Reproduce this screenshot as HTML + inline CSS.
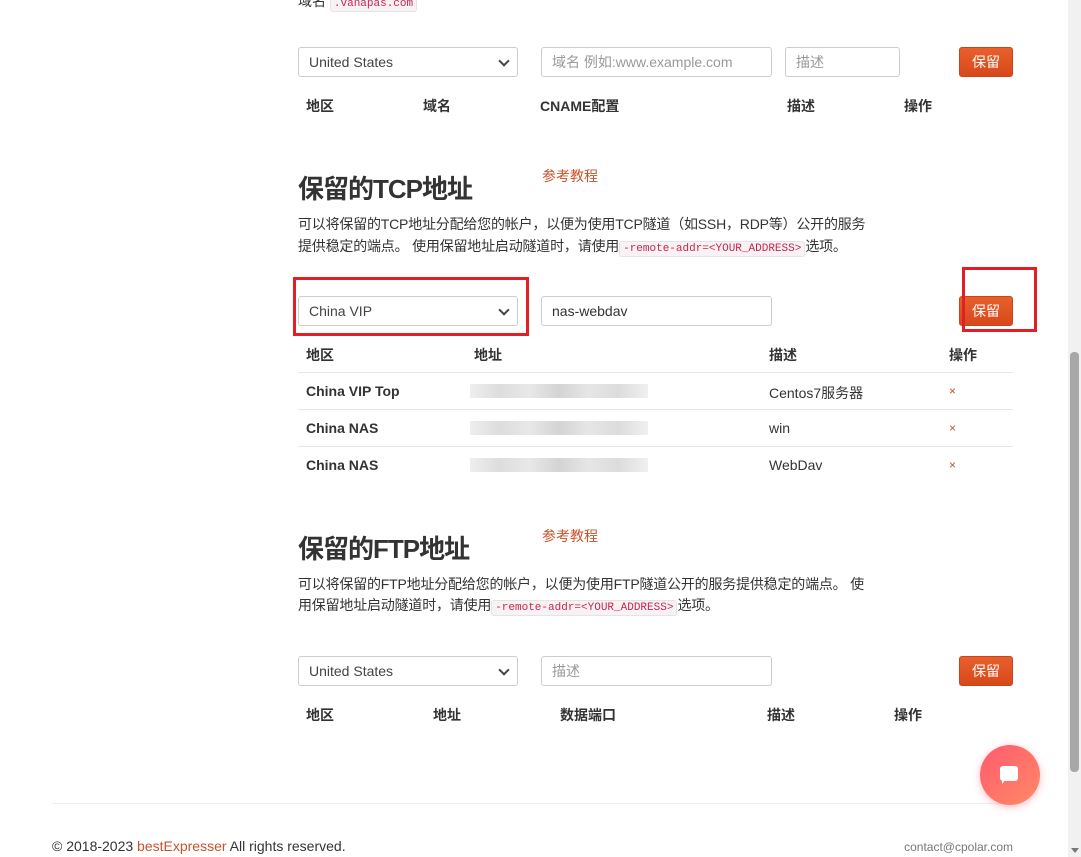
<!DOCTYPE html>
<html><head><meta charset="utf-8"><style>
*{box-sizing:border-box;margin:0;padding:0}
body{width:1081px;height:857px;overflow:hidden;background:#fff;position:relative;font-family:"Liberation Sans","Noto Sans CJK SC",sans-serif;color:#333;font-size:14px}
.a{position:absolute;white-space:nowrap}
.sel,.inp{position:absolute;height:30px;border:1px solid #ccc;border-radius:3px;background:#fff;padding:0 10px;line-height:28px;font-size:14px;color:#444}
.sel:after{content:"";position:absolute;right:9px;top:9px;width:6px;height:6px;border-right:2px solid #444;border-bottom:2px solid #444;transform:rotate(45deg)}
.ph{color:#999}
.btn{position:absolute;width:54px;height:30px;border-radius:3px;background:linear-gradient(#e8602c,#d8481a);border:1px solid #c8451a;color:#fff;text-align:center;line-height:28px;font-size:14px}
.th{font-weight:bold;font-size:14px;color:#333}
h2{position:absolute;font-size:26px;font-weight:bold;color:#333;white-space:nowrap;letter-spacing:-1px}
.link{color:#c9522a;font-size:14px}
.p{position:absolute;font-size:14px;color:#333;white-space:nowrap;line-height:21px;letter-spacing:-0.2px}
code{font-family:"Liberation Mono",monospace;font-size:11px;color:#c7254e;background:#f9f2f4;border:1px solid #e4e4e4;border-radius:3px;padding:1px 3px;letter-spacing:0}
.hr{position:absolute;left:298px;width:715px;height:1px;background:#e6e6e6}
.blur{position:absolute;left:470px;width:178px;height:14px;background:linear-gradient(90deg,#eee,#ddd,#e8e8e8,#d4d4d4,#e6e6e6,#dcdcdc,#f0f0f0)}
.rb{position:absolute;border:3px solid #e31e24}
.x{color:#c9522a;font-size:12px}
</style></head><body>
<div class="a" style="left:298px;top:-9px">域名 <code>.vanapas.com</code></div>

<div class="sel" style="left:298px;top:47px;width:220px">United States</div>
<div class="inp ph" style="left:541px;top:47px;width:231px">域名 例如:www.example.com</div>
<div class="inp ph" style="left:785px;top:47px;width:115px">描述</div>
<div class="btn" style="left:959px;top:47px">保留</div>
<div class="a th" style="left:306px;top:96px">地区</div>
<div class="a th" style="left:423px;top:96px">域名</div>
<div class="a th" style="left:540px;top:96px">CNAME配置</div>
<div class="a th" style="left:787px;top:96px">描述</div>
<div class="a th" style="left:904px;top:96px">操作</div>

<h2 style="left:298px;top:169px">保留的TCP地址</h2>
<div class="a link" style="left:542px;top:166px">参考教程</div>
<div class="p" style="left:298px;top:214px">可以将保留的TCP地址分配给您的帐户，以便为使用TCP隧道（如SSH，RDP等）公开的服务</div>
<div class="p" style="left:298px;top:236px">提供稳定的端点。 使用保留地址启动隧道时，请使用<code>-remote-addr=&lt;YOUR_ADDRESS&gt;</code>选项。</div>

<div class="sel" style="left:298px;top:296px;width:220px">China VIP</div>
<div class="inp" style="left:541px;top:296px;width:231px;color:#333">nas-webdav</div>
<div class="btn" style="left:959px;top:296px">保留</div>
<div class="rb" style="left:293px;top:277px;width:236px;height:59px"></div>
<div class="rb" style="left:962px;top:267px;width:75px;height:65px"></div>

<div class="a th" style="left:306px;top:345px">地区</div>
<div class="a th" style="left:474px;top:345px">地址</div>
<div class="a th" style="left:769px;top:345px">描述</div>
<div class="a th" style="left:949px;top:345px">操作</div>
<div class="hr" style="top:372px"></div>
<div class="a th" style="left:306px;top:383px">China VIP Top</div>
<div class="blur" style="top:384px"></div>
<div class="a" style="left:769px;top:383px">Centos7服务器</div>
<div class="a x" style="left:949px;top:384px">×</div>
<div class="hr" style="top:409px"></div>
<div class="a th" style="left:306px;top:420px">China NAS</div>
<div class="blur" style="top:421px"></div>
<div class="a" style="left:769px;top:420px">win</div>
<div class="a x" style="left:949px;top:421px">×</div>
<div class="hr" style="top:446px"></div>
<div class="a th" style="left:306px;top:457px">China NAS</div>
<div class="blur" style="top:458px"></div>
<div class="a" style="left:769px;top:457px">WebDav</div>
<div class="a x" style="left:949px;top:458px">×</div>

<h2 style="left:298px;top:529px">保留的FTP地址</h2>
<div class="a link" style="left:542px;top:526px">参考教程</div>
<div class="p" style="left:298px;top:574px">可以将保留的FTP地址分配给您的帐户，以便为使用FTP隧道公开的服务提供稳定的端点。 使</div>
<div class="p" style="left:298px;top:595px">用保留地址启动隧道时，请使用<code>-remote-addr=&lt;YOUR_ADDRESS&gt;</code>选项。</div>

<div class="sel" style="left:298px;top:656px;width:220px">United States</div>
<div class="inp ph" style="left:541px;top:656px;width:231px">描述</div>
<div class="btn" style="left:959px;top:656px">保留</div>
<div class="a th" style="left:306px;top:705px">地区</div>
<div class="a th" style="left:433px;top:705px">地址</div>
<div class="a th" style="left:560px;top:705px">数据端口</div>
<div class="a th" style="left:767px;top:705px">描述</div>
<div class="a th" style="left:894px;top:705px">操作</div>

<div class="a" style="left:52px;top:803px;width:968px;height:1px;background:#eee"></div>
<div class="a" style="left:52px;top:838px;font-size:14px;color:#333">© 2018-2023 <span style="color:#c9522a">bestExpresser</span> All rights reserved.</div>
<div class="a" style="right:68px;top:840px;font-size:12px;color:#777">contact@cpolar.com</div>

<div class="a" style="left:980px;top:745px;width:60px;height:60px;border-radius:50%;background:linear-gradient(135deg,#ff5a6e,#ff8a66);box-shadow:0 2px 8px rgba(255,90,110,.4)"></div>
<div class="a" style="left:1000px;top:766px;width:18px;height:15px;background:#fff;border-radius:3px"></div>
<div class="a" style="left:1002px;top:779px;width:0;height:0;border-left:4px solid #fff;border-bottom:5px solid transparent"></div>

<div class="a" style="left:1068px;top:0;width:13px;height:857px;background:#f1f1f1"></div>
<div class="a" style="left:1070px;top:352px;width:9px;height:420px;background:#a8a8a8;border-radius:4px"></div>
<div class="a" style="left:1071px;top:848px;width:0;height:0;border-left:4px solid transparent;border-right:4px solid transparent;border-top:5px solid #777"></div>
</body></html>
